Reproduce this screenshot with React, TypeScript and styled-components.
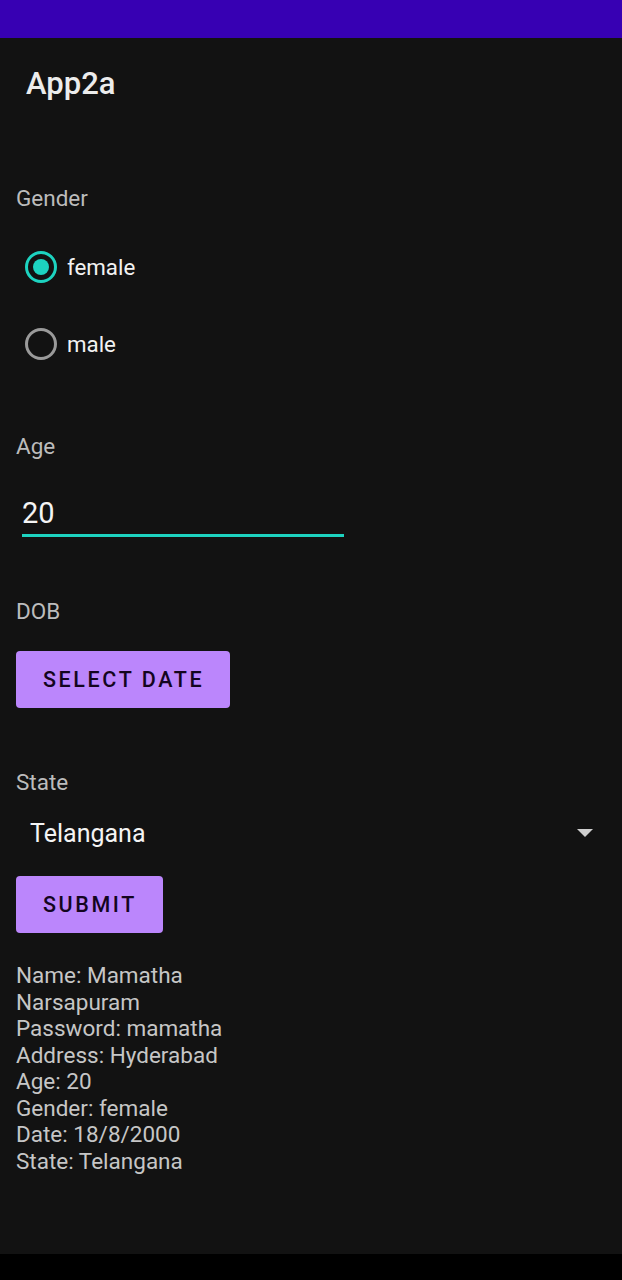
import React, { useState } from 'react';
import styled, { createGlobalStyle } from 'styled-components';

const GlobalStyle = createGlobalStyle`
  html, body {
    margin: 0;
    padding: 0;
    background: #121212;
  }
  body {
    font-family: Roboto, "Noto Sans", sans-serif;
  }
`;

const Screen = styled.div`
  width: 622px;
  height: 1280px;
  display: flex;
  flex-direction: column;
  background: #121212;
  overflow: hidden;
`;

const StatusBar = styled.div`
  height: 38px;
  flex-shrink: 0;
  background: #3700b3;
`;

const AppBar = styled.div`
  height: 92px;
  display: flex;
  align-items: center;
  padding-left: 26px;
  font-size: 31px;
  font-weight: 500;
  color: #ececec;
  padding-bottom: 2px;
  box-sizing: border-box;
`;

const Content = styled.div`
  flex: 1;
  display: flex;
  flex-direction: column;
  padding: 0 16px;
`;

const Label = styled.div<{ $top: number }>`
  margin-top: ${(p) => p.$top}px;
  font-size: 22.5px;
  line-height: 24px;
  color: #bcbcbc;
`;

const RadioGroup = styled.div`
  display: flex;
  flex-direction: column;
  margin-top: 41px;
  gap: 45px;
`;

const RadioRow = styled.label`
  display: flex;
  align-items: center;
  gap: 10px;
  padding-left: 9px;
  font-size: 22.3px;
  color: #f2f2f2;
  height: 32px;
  cursor: pointer;
`;

const RadioCircle = styled.span<{ $checked: boolean }>`
  width: 32px;
  height: 32px;
  box-sizing: border-box;
  border-radius: 50%;
  border: 3px solid ${(p) => (p.$checked ? '#1dd3c0' : '#9a9a9a')};
  display: flex;
  align-items: center;
  justify-content: center;
  &::after {
    content: '';
    width: 16px;
    height: 16px;
    border-radius: 50%;
    background: #1dd3c0;
    display: ${(p) => (p.$checked ? 'block' : 'none')};
  }
`;

const AgeField = styled.div`
  margin-top: 39px;
  margin-left: 6px;
  width: 322px;
  border-bottom: 3px solid #1dd3c0;
  padding-bottom: 5px;
  font-size: 29px;
  line-height: 32px;
  color: #f4f4f4;
`;

const Button = styled.button<{ $top: number }>`
  align-self: flex-start;
  margin-top: ${(p) => p.$top}px;
  height: 57px;
  padding: 0 26px 0 27px;
  border: none;
  border-radius: 4px;
  background: #bb86fc;
  color: #14051f;
  font-family: Roboto, "Noto Sans", sans-serif;
  font-size: 21.5px;
  font-weight: 500;
  letter-spacing: 2.6px;
  cursor: pointer;
`;

const Spinner = styled.div`
  margin-top: 17px;
  height: 44px;
  display: flex;
  align-items: center;
  justify-content: space-between;
  padding-left: 14px;
  padding-right: 13px;
  font-size: 25px;
  color: #f4f4f4;
`;

const Arrow = styled.span`
  width: 0;
  height: 0;
  border-left: 8px solid transparent;
  border-right: 8px solid transparent;
  border-top: 8px solid #cfcfcf;
`;

const Summary = styled.div`
  margin-top: 29px;
  font-size: 22.5px;
  line-height: 26.5px;
  color: #c6c6c6;
`;

const BottomBar = styled.div`
  height: 26px;
  flex-shrink: 0;
  background: #000;
`;

export default function App() {
  const [gender, setGender] = useState('female');
  const lines = [
    'Name: Mamatha',
    'Narsapuram',
    'Password: mamatha',
    'Address: Hyderabad',
    'Age: 20',
    `Gender: ${gender}`,
    'Date: 18/8/2000',
    'State: Telangana',
  ];
  return (
    <>
      <GlobalStyle />
      <Screen>
        <StatusBar />
        <AppBar>App2a</AppBar>
        <Content>
          <Label $top={56}>Gender</Label>
          <RadioGroup>
            {['female', 'male'].map((g) => (
              <RadioRow key={g} onClick={() => setGender(g)}>
                <RadioCircle $checked={gender === g} />
                {g}
              </RadioRow>
            ))}
          </RadioGroup>
          <Label $top={74}>Age</Label>
          <AgeField>20</AgeField>
          <Label $top={62}>DOB</Label>
          <Button $top={28}>SELECT DATE</Button>
          <Label $top={62}>State</Label>
          <Spinner>
            Telangana
            <Arrow />
          </Spinner>
          <Button $top={21}>SUBMIT</Button>
          <Summary>
            {lines.map((l) => (
              <div key={l}>{l}</div>
            ))}
          </Summary>
        </Content>
        <BottomBar />
      </Screen>
    </>
  );
}
